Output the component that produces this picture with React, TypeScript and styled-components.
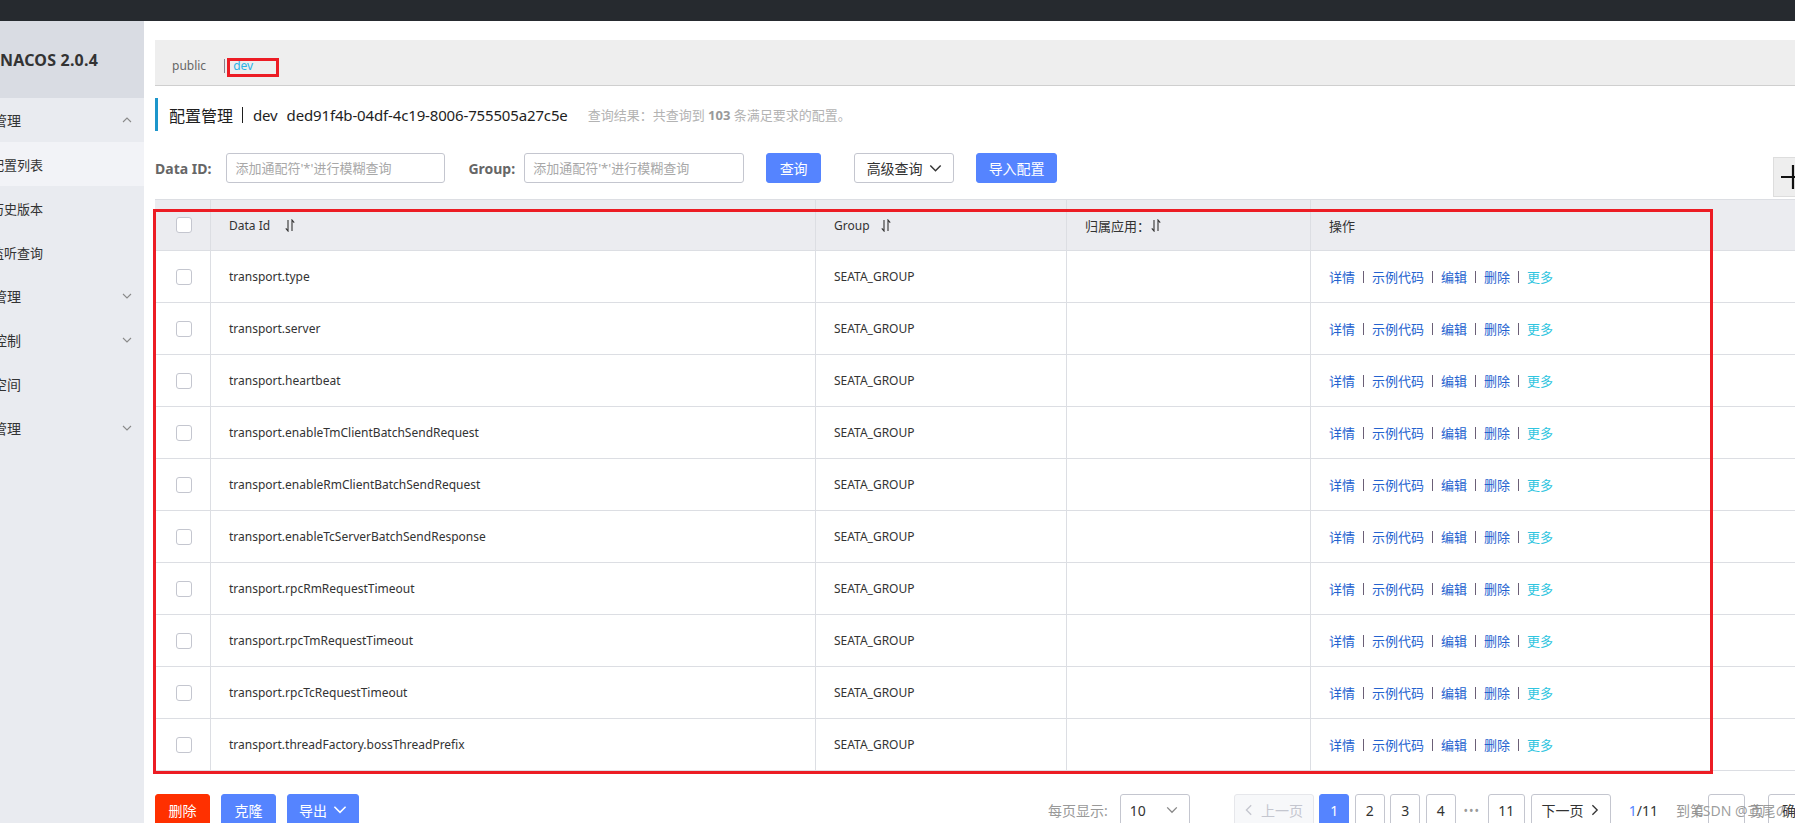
import React from "react";
import styled, { createGlobalStyle } from "styled-components";

const GlobalStyle = createGlobalStyle`
  html, body { margin: 0; padding: 0; }
  body {
    font-family: "Noto Sans", "Noto Sans CJK SC", sans-serif;
    color: #333;
    background: #fff;
    overflow: hidden;
  }
  * { box-sizing: border-box; }
`;

const Page = styled.div`
  width: 1795px;
  height: 823px;
  display: flex;
  flex-direction: column;
  overflow: hidden;
`;

const TopBar = styled.div`
  height: 21px;
  flex: none;
  background: #262a2f;
`;

const Body = styled.div`
  flex: 1;
  display: flex;
  min-height: 0;
`;

const Sidebar = styled.aside`
  width: 144px;
  flex: none;
  background: #e9ebf0;
  overflow: hidden;
`;

const Logo = styled.div`
  height: 77px;
  background: #d9dce3;
  display: flex;
  align-items: center;
  font-size: 16px;
  font-weight: 700;
  color: #333;
  letter-spacing: 0.2px;
  white-space: nowrap;
`;

const MenuItem = styled.div<{ $active?: boolean }>`
  height: 44px;
  display: flex;
  align-items: center;
  justify-content: space-between;
  padding-right: 12px;
  background: ${(p) => (p.$active ? "#f2f3f7" : "transparent")};
`;

const MenuLabel = styled.span<{ $sub?: boolean }>`
  font-size: ${(p) => (p.$sub ? 13 : 14)}px;
  color: #333;
  white-space: nowrap;
  margin-left: ${(p) => (p.$sub ? "-9px" : "-35px")};
`;

const Main = styled.main`
  flex: 1;
  min-width: 0;
  padding: 19px 0 0 11px;
  display: flex;
  flex-direction: column;
`;

const NamespaceBar = styled.div`
  position: relative;
  height: 46px;
  flex: none;
  background: #eeeeee;
  border-bottom: 1px solid #cfcfcf;
  display: flex;
  align-items: flex-start;
  padding: 17px 0 0 17px;
  font-size: 12px;
  line-height: 18px;
`;

const NsItem = styled.span<{ $current?: boolean }>`
  color: ${(p) => (p.$current ? "#2bb3e6" : "#666")};
`;

const NsSep = styled.span`
  width: 1px;
  height: 14px;
  margin: 2px 8px 0 18px;
  background: #8c7f8c;
`;

const Annotation = styled.div<{ $l: number; $t: number; $w: number; $h: number }>`
  position: absolute;
  left: ${(p) => p.$l}px;
  top: ${(p) => p.$t}px;
  width: ${(p) => p.$w}px;
  height: ${(p) => p.$h}px;
  border: 3px solid #ec1c24;
  pointer-events: none;
  z-index: 5;
`;

const TitleRow = styled.div`
  margin-top: 12px;
  height: 33px;
  flex: none;
  border-left: 3px solid #1d96cb;
  padding-left: 11px;
  display: flex;
  align-items: center;
  white-space: nowrap;
`;

const Title = styled.span`
  display: flex;
  align-items: center;
  font-size: 16px;
  color: #1e1e1e;
`;

const TitleSep = styled.span`
  width: 1px;
  height: 16px;
  background: #1e1e1e;
  margin: 0 10px 0 9px;
`;

const TitleLatin = styled.span<{ $ml?: number }>`
  font-size: 15px;
  letter-spacing: -0.15px;
  margin-left: ${(p) => p.$ml ?? 0}px;
`;

const ResultText = styled.span`
  margin-left: 20px;
  font-size: 13px;
  color: #b3b3b3;
  b {
    color: #999;
    font-weight: 700;
  }
`;

const SearchRow = styled.div`
  margin-top: 22px;
  height: 30px;
  flex: none;
  display: flex;
  align-items: center;
  white-space: nowrap;
`;

const FieldLabel = styled.label<{ $gapLeft?: number; $gapRight: number }>`
  font-size: 14px;
  font-weight: 700;
  color: #666;
  margin-left: ${(p) => p.$gapLeft ?? 0}px;
  margin-right: ${(p) => p.$gapRight}px;
`;

const TextInput = styled.input<{ $w: number }>`
  width: ${(p) => p.$w}px;
  height: 30px;
  border: 1px solid #c4c6cf;
  border-radius: 3px;
  padding: 0 8px;
  font-family: inherit;
  font-size: 13px;
  color: #333;
  outline: none;
  &::placeholder {
    color: #a8a8a8;
  }
`;

const Btn = styled.button<{ $variant: "primary" | "normal" | "danger"; $w: number; $gapLeft?: number }>`
  width: ${(p) => p.$w}px;
  height: 30px;
  margin-left: ${(p) => p.$gapLeft ?? 0}px;
  border-radius: 3px;
  font-family: inherit;
  font-size: 14px;
  display: inline-flex;
  align-items: center;
  justify-content: center;
  gap: 6px;
  cursor: pointer;
  padding: 0;
  border: 1px solid
    ${(p) =>
      p.$variant === "primary" ? "#5584ff" : p.$variant === "danger" ? "#ff3000" : "#c4c6cf"};
  background: ${(p) =>
    p.$variant === "primary" ? "#5584ff" : p.$variant === "danger" ? "#ff3000" : "#fff"};
  color: ${(p) => (p.$variant === "normal" ? "#333" : "#fff")};
`;

const PlusBtn = styled.button`
  align-self: flex-start;
  margin-top: 4px;
  margin-left: auto;
  margin-right: -18px;
  width: 40px;
  height: 40px;
  flex: none;
  background: #eeeeee;
  border: 1px solid #dddddd;
  padding: 0 0 0 7px;
  display: flex;
  align-items: center;
`;

const TableWrap = styled.div`
  position: relative;
  margin-top: 16px;
  flex: none;
  border-top: 1px solid #dcdee3;
`;

const Row = styled.div<{ $head?: boolean }>`
  display: grid;
  grid-template-columns: 56px 605px 251px 244px 1fr;
  height: ${(p) => (p.$head ? 51 : 52)}px;
  background: ${(p) => (p.$head ? "#ebecf0" : "#fff")};
  border-bottom: 1px solid #dcdee3;
`;

const Cell = styled.div<{ $center?: boolean; $last?: boolean; $cjk?: boolean }>`
  display: flex;
  align-items: center;
  justify-content: ${(p) => (p.$center ? "center" : "flex-start")};
  padding: ${(p) => (p.$center ? "0" : "0 18px")};
  border-right: ${(p) => (p.$last ? "none" : "1px solid #dcdee3")};
  font-size: ${(p) => (p.$cjk ? 13 : 12)}px;
  color: #333;
  white-space: nowrap;
`;

const SortWrap = styled.span<{ $ml: number }>`
  display: inline-flex;
  margin-left: ${(p) => p.$ml}px;
`;

const CheckBox = styled.span`
  width: 16px;
  height: 16px;
  border: 1px solid #c4c6cf;
  border-radius: 3px;
  background: #fff;
  margin-left: 3px;
`;

const Actions = styled.div`
  display: flex;
  align-items: center;
  font-size: 13px;
`;

const ActLink = styled.a<{ $more?: boolean }>`
  color: ${(p) => (p.$more ? "#2fc5e0" : "#2462cf")};
  text-decoration: none;
  cursor: pointer;
`;

const ActSep = styled.span`
  width: 1px;
  height: 12px;
  margin: 0 8px;
  background: #6b5f76;
`;

const BottomBar = styled.div`
  margin-top: 23px;
  height: 32px;
  flex: none;
  display: flex;
  align-items: center;
  white-space: nowrap;
`;

const BottomBtn = styled(Btn)`
  height: 32px;
  margin-right: 11px;
  margin-left: 0;
`;

const Pager = styled.div`
  margin-left: auto;
  margin-right: -29px;
  display: flex;
  align-items: center;
  height: 32px;
  font-size: 14px;
`;

const PagerLabel = styled.span<{ $ml?: number }>`
  color: #999;
  margin-left: ${(p) => p.$ml ?? 0}px;
`;

const SelectBox = styled.div`
  margin-left: 12px;
  width: 70px;
  height: 32px;
  border: 1px solid #c4c6cf;
  border-radius: 3px;
  display: flex;
  align-items: center;
  justify-content: space-between;
  padding: 0 11px 0 9px;
  color: #333;
`;

const PageBtn = styled.button<{ $w: number; $active?: boolean; $disabled?: boolean; $ml: number }>`
  width: ${(p) => p.$w}px;
  height: 32px;
  margin-left: ${(p) => p.$ml}px;
  border-radius: 3px;
  padding: 0;
  font-family: inherit;
  font-size: 14px;
  display: inline-flex;
  align-items: center;
  justify-content: center;
  gap: 7px;
  border: 1px solid ${(p) => (p.$active ? "#5584ff" : p.$disabled ? "#e6e7eb" : "#c4c6cf")};
  background: ${(p) => (p.$active ? "#5584ff" : p.$disabled ? "#f7f8fa" : "#fff")};
  color: ${(p) => (p.$active ? "#fff" : p.$disabled ? "#c4c6cf" : "#333")};
`;

const Ellipsis = styled.span`
  width: 32px;
  text-align: center;
  color: #999;
  font-size: 12px;
  letter-spacing: 1px;
`;

const PageInfo = styled.span`
  margin-left: 18px;
  color: #333;
  em {
    font-style: normal;
    color: #5584ff;
  }
`;

const JumpInput = styled.div`
  margin-left: 4px;
  width: 37px;
  height: 32px;
  border: 1px solid #c4c6cf;
  border-radius: 3px;
`;

const Watermark = styled.div`
  position: absolute;
  left: 1694px;
  top: 800px;
  font-size: 14px;
  color: rgba(140, 140, 140, 0.85);
  white-space: nowrap;
  pointer-events: none;
  z-index: 10;
  font-family: "Noto Sans", "Noto Sans CJK SC", "Noto Sans CJK JP", sans-serif;
`;

const Chevron = ({ dir, color = "#888", size = 9 }: { dir: "up" | "down" | "left" | "right"; color?: string; size?: number }) => {
  const paths: Record<string, string> = {
    up: "M1 6L5 2L9 6",
    down: "M1 2L5 6L9 2",
    left: "M6 1L2 5L6 9",
    right: "M2 1L6 5L2 9",
  };
  const vertical = dir === "up" || dir === "down";
  const vb = vertical ? "0 0 10 8" : "0 0 8 10";
  const w = vertical ? size : size * 0.8;
  const h = vertical ? size * 0.8 : size;
  return (
    <svg width={w} height={h} viewBox={vb} fill="none" stroke={color} strokeWidth="1.1">
      <path d={paths[dir]} />
    </svg>
  );
};

const SortIcon = () => (
  <svg width="10" height="13" viewBox="0 0 10 13" fill="none" stroke="#333" strokeWidth="1.1">
    <path d="M3 1v11L0.8 9.4" />
    <path d="M7 12V1l2.2 2.6" />
  </svg>
);

const PlusIcon = () => (
  <svg width="24" height="24" viewBox="0 0 24 24" fill="none" stroke="#111" strokeWidth="2.2">
    <path d="M0 12h24M12 0v24" />
  </svg>
);

const dataIds = [
  "transport.type",
  "transport.server",
  "transport.heartbeat",
  "transport.enableTmClientBatchSendRequest",
  "transport.enableRmClientBatchSendRequest",
  "transport.enableTcServerBatchSendResponse",
  "transport.rpcRmRequestTimeout",
  "transport.rpcTmRequestTimeout",
  "transport.rpcTcRequestTimeout",
  "transport.threadFactory.bossThreadPrefix",
];

const menu: { label: string; sub?: boolean; active?: boolean; chevron?: "up" | "down" }[] = [
  { label: "配置管理", chevron: "up" },
  { label: "配置列表", sub: true, active: true },
  { label: "历史版本", sub: true },
  { label: "监听查询", sub: true },
  { label: "服务管理", chevron: "down" },
  { label: "权限控制", chevron: "down" },
  { label: "命名空间" },
  { label: "集群管理", chevron: "down" },
];

export default function App() {
  return (
    <>
      <GlobalStyle />
      <Page>
        <TopBar />
        <Body>
          <Sidebar>
            <Logo>NACOS 2.0.4</Logo>
            {menu.map((m) => (
              <MenuItem key={m.label} $active={m.active}>
                <MenuLabel $sub={m.sub}>{m.label}</MenuLabel>
                {m.chevron && <Chevron dir={m.chevron} color="#8a8a8a" size={10} />}
              </MenuItem>
            ))}
          </Sidebar>
          <Main>
            <NamespaceBar>
              <NsItem>public</NsItem>
              <NsSep />
              <NsItem $current>dev</NsItem>
              <Annotation $l={72} $t={18} $w={52} $h={19} />
            </NamespaceBar>

            <TitleRow>
              <Title>
                配置管理
                <TitleSep />
                <TitleLatin>dev</TitleLatin>
                <TitleLatin $ml={9}>ded91f4b-04df-4c19-8006-755505a27c5e</TitleLatin>
              </Title>
              <ResultText>
                查询结果：共查询到 <b>103</b> 条满足要求的配置。
              </ResultText>
            </TitleRow>

            <SearchRow>
              <FieldLabel $gapRight={15}>Data ID:</FieldLabel>
              <TextInput $w={219} placeholder="添加通配符'*'进行模糊查询" />
              <FieldLabel $gapLeft={23} $gapRight={9}>Group:</FieldLabel>
              <TextInput $w={220} placeholder="添加通配符'*'进行模糊查询" />
              <Btn $variant="primary" $w={55} $gapLeft={22}>查询</Btn>
              <Btn $variant="normal" $w={100} $gapLeft={33}>
                高级查询 <Chevron dir="down" color="#333" size={13} />
              </Btn>
              <Btn $variant="primary" $w={81} $gapLeft={22}>导入配置</Btn>
              <PlusBtn>
                <PlusIcon />
              </PlusBtn>
            </SearchRow>

            <TableWrap>
              <Row $head>
                <Cell $center>
                  <CheckBox />
                </Cell>
                <Cell>
                  Data Id
                  <SortWrap $ml={15}>
                    <SortIcon />
                  </SortWrap>
                </Cell>
                <Cell>
                  Group
                  <SortWrap $ml={11}>
                    <SortIcon />
                  </SortWrap>
                </Cell>
                <Cell $cjk>
                  归属应用：
                  <SortWrap $ml={1}>
                    <SortIcon />
                  </SortWrap>
                </Cell>
                <Cell $cjk $last>
                  操作
                </Cell>
              </Row>
              {dataIds.map((id) => (
                <Row key={id}>
                  <Cell $center>
                    <CheckBox />
                  </Cell>
                  <Cell>{id}</Cell>
                  <Cell>SEATA_GROUP</Cell>
                  <Cell />
                  <Cell $last>
                    <Actions>
                      <ActLink>详情</ActLink>
                      <ActSep />
                      <ActLink>示例代码</ActLink>
                      <ActSep />
                      <ActLink>编辑</ActLink>
                      <ActSep />
                      <ActLink>删除</ActLink>
                      <ActSep />
                      <ActLink $more>更多</ActLink>
                    </Actions>
                  </Cell>
                </Row>
              ))}
              <Annotation $l={-2} $t={9} $w={1560} $h={565} />
            </TableWrap>

            <BottomBar>
              <BottomBtn $variant="danger" $w={55}>删除</BottomBtn>
              <BottomBtn $variant="primary" $w={55}>克隆</BottomBtn>
              <BottomBtn $variant="primary" $w={72}>
                导出 <Chevron dir="down" color="#fff" size={14} />
              </BottomBtn>
              <Pager>
                <PagerLabel>每页显示:</PagerLabel>
                <SelectBox>
                  <span>10</span>
                  <Chevron dir="down" color="#888" size={12} />
                </SelectBox>
                <PageBtn $w={80} $ml={44} $disabled>
                  <Chevron dir="left" color="#c4c6cf" size={12} />
                  上一页
                </PageBtn>
                <PageBtn $w={30} $ml={5.5} $active>1</PageBtn>
                <PageBtn $w={30} $ml={5.5}>2</PageBtn>
                <PageBtn $w={30} $ml={5.5}>3</PageBtn>
                <PageBtn $w={30} $ml={5.5}>4</PageBtn>
                <Ellipsis>•••</Ellipsis>
                <PageBtn $w={37} $ml={0}>11</PageBtn>
                <PageBtn $w={80} $ml={6}>
                  下一页
                  <Chevron dir="right" color="#333" size={12} />
                </PageBtn>
                <PageInfo>
                  <em>1</em>/11
                </PageInfo>
                <PagerLabel $ml={18}>到第</PagerLabel>
                <JumpInput />
                <PagerLabel $ml={5}>页</PagerLabel>
                <PageBtn $w={56} $ml={4}>确定</PageBtn>
              </Pager>
            </BottomBar>
          </Main>
        </Body>
      </Page>
      <Watermark>CSDN @鸢尾の</Watermark>
    </>
  );
}
